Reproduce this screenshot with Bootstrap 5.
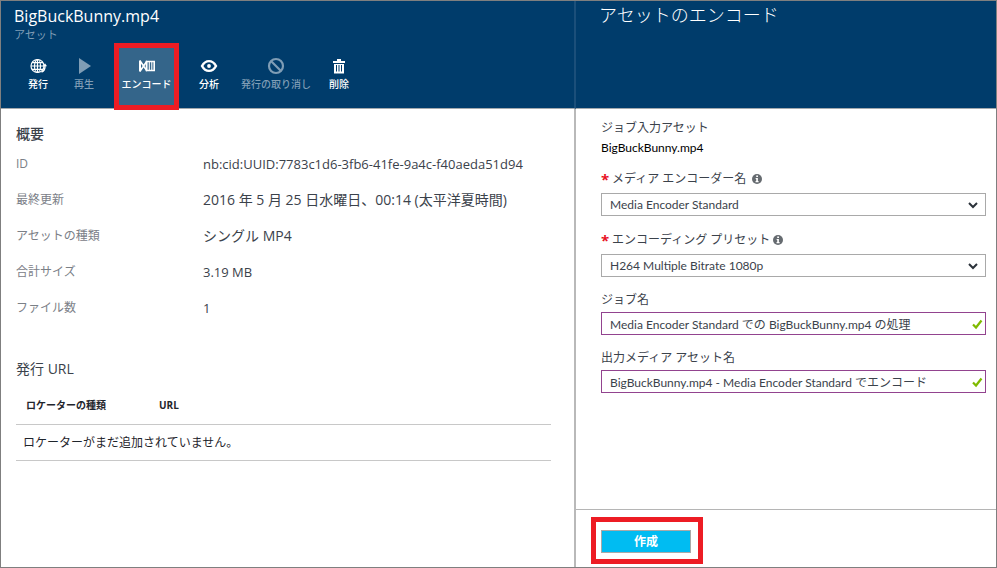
<!DOCTYPE html>
<html lang="ja">
<head>
<meta charset="utf-8">
<meta name="viewport" content="width=device-width, initial-scale=1">
<title>BigBuckBunny.mp4 - アセットのエンコード</title>
<link rel="stylesheet" href="https://cdn.jsdelivr.net/npm/bootstrap@5.3.0/dist/css/bootstrap.min.css">
<style>
  body { font-family: "Open Sans", "Noto Sans CJK JP", sans-serif; font-size: 12px; line-height: 16px; color: #3b424b; }
  .portal { border: 1px solid #7f7f7f; }
  .blade-asset { flex: 573 1 0; min-width: 0; border-right: 2px solid #b9b9b9; }
  .blade-encode { flex: 420 1 0; min-width: 0; }
  .blade-head { height: 108px; background: #003c6b; color: #fff; border-bottom: 1px solid #a3a9ae; }
  .blade-asset .blade-head { padding: 3px 13px 0; margin-right: -2px; border-right: 2px solid #1b4f7a; }
  .blade-encode .blade-head { padding: 1px 23px 0; }
  .blade-title { font-size: 16px; line-height: 24px; font-weight: 400; margin: 0; }
  .blade-encode .blade-title { font-size: 18px; font-family: "Noto Sans CJK JP", sans-serif; font-weight: 300; }
  .blade-kind { font-size: 11px; line-height: 14px; color: #7f9db5; }
  .toolbar { padding: 6px 0 0 1px; }
  .tool-btn { border: 0; background: none; color: #fff; font-size: 10px; line-height: 14px; font-weight: 500; padding: 9px 2px 14px; min-width: 46px; height: 57px; }
  .tool-btn svg { display: block; width: 18px; height: 18px; margin: 0 auto 2px; }
  .tool-btn:disabled { color: #7f9db5; }
  .tool-active { background: #34658a; outline: 5px solid #ed1c24; margin: 0 12px; width: 55px; }
  .tool-wide { margin: 0 3px 0 7px; }
  .latin { font-family: Lato, "Noto Sans CJK JP", sans-serif; }
  .asset-body { padding: 15px 23px 0 15px; }
  .section-title { font-size: 14px; line-height: 20px; font-weight: 400; margin: 0; }
  .facts { display: grid; grid-template-columns: 187px 1fr; grid-auto-rows: 36px; align-items: center; margin: 2px 0 33px; }
  .facts dt { font-weight: 400; color: #7b8087; }
  .facts dd { margin: 0; font-size: 14px; line-height: 20px; }
  .facts .fact-id { font-size: 13px; }
  .locators { width: 100%; table-layout: fixed; color: #1f252c; }
  .locators th { font-size: 10px; font-weight: 700; padding: 8px 10px 0; height: 45px; }
  .locators th:first-child { width: 133px; }
  .locators td { padding: 2px 7px 0; height: 36px; border: solid #c8c8c8; border-width: 1px 0; }
  .encode-body { padding: 11px 10px 0 25px; }
  .field-name { display: flex; align-items: center; height: 16px; white-space: pre; }
  .field-gap { margin-top: 15px; }
  .select-wrap { margin-top: 6px; }
  .req { color: #e81123; font-weight: 700; font-size: 15px; width: 11px; }
  .info { width: 10px; height: 10px; margin-left: 3px; }
  .field { font-family: Lato, "Noto Sans CJK JP", sans-serif; height: 23px; border: 1px solid #a9a9a9; border-radius: 0; background: #fff; color: #3b424b; font-size: 12px; line-height: 16px; padding: 2px 30px 2px 8px; width: 100%; appearance: none; display: block; }
  .field-valid { border-color: #92438f; }
  .field-icon { position: absolute; right: 7px; top: 6px; width: 12px; height: 12px; pointer-events: none; }
  .valid-icon { right: 3px; }
  .encode-foot { border-top: 1px solid #b5b5b5; padding: 7px 15px 3px; }
  .create-mark { border: 5px solid #ed1c24; padding: 8px 7px 6px 5px; }
  .create-btn { width: 90px; height: 23px; border: 1px solid #a9a9a9; border-radius: 0; background: #00bcf2; color: #fff; font-size: 12px; font-weight: 700; line-height: 16px; padding: 0; }
</style>
</head>
<body>
<div class="portal d-flex min-vh-100 bg-white">
  <main class="blade-asset d-flex flex-column">
    <header class="blade-head">
      <h1 class="blade-title">BigBuckBunny.mp4</h1>
      <div class="blade-kind">アセット</div>
      <div class="toolbar d-flex">
        <button class="tool-btn" type="button">
          <svg viewBox="0 0 18 18" fill="none" stroke="currentColor" stroke-width="1.2"><circle cx="8.500" cy="9" r="6.500"/><ellipse cx="8.500" cy="9" rx="3" ry="6.500"/><path d="M8.500 2.500v13M2 9h13M3 5.700h11M3 12.300h11"/><path d="M12.500 15c2.500-1 3.700-3.200 3.500-6" stroke-width="1.400"/><path d="M13.800 9.300 16 6.300l2 3z" fill="currentColor" stroke="none"/></svg>発行</button>
        <button class="tool-btn" type="button" disabled>
          <svg viewBox="0 0 18 18" fill="currentColor"><path d="M4 1l12 8-12 8z"/></svg>再生</button>
        <button class="tool-btn tool-active" type="button">
          <svg viewBox="0 0 18 18" fill="none" stroke="currentColor"><path d="M2 3.500v11" stroke-width="2"/><path d="M2 3.800 9 14M2 14.200 9 4" stroke-width="1.600"/><path d="M8.500 4.500h7.700v9H8.500z" stroke-width="1.600"/><path d="M8.800 4v10M11.300 4v10M13.800 4v10" stroke-width="1.100"/></svg>エンコード</button>
        <button class="tool-btn" type="button">
          <svg viewBox="0 0 18 18" fill="none" stroke="currentColor"><path d="M2 9c3.500-6.500 10.500-6.500 14 0-3.500 6.500-10.500 6.500-14 0z" stroke-width="2.400"/><circle cx="9" cy="9" r="1.900" fill="currentColor" stroke="none"/></svg>分析</button>
        <button class="tool-btn tool-wide text-nowrap" type="button" disabled>
          <svg viewBox="0 0 18 18" fill="none" stroke="currentColor" stroke-width="2.200"><circle cx="9" cy="9" r="7"/><path d="M4 4l10 10"/></svg>発行の取り消し</button>
        <button class="tool-btn" type="button">
          <svg viewBox="0 0 18 18" fill="currentColor"><path d="M3 4h4V2h4v2h4v2H3z"/><path fill-rule="evenodd" d="M4 7h10v9.500H4zM6 8v6.500h1V8zm2.500 0v6.500h1V8zM11 8v6.500h1V8z"/></svg>削除</button>
      </div>
    </header>
    <div class="asset-body">
      <h2 class="section-title fw-medium">概要</h2>
      <dl class="facts">
        <dt>ID</dt><dd class="fact-id">nb:cid:UUID:7783c1d6-3fb6-41fe-9a4c-f40aeda51d94</dd>
        <dt>最終更新</dt><dd>2016 年 5 月 25 日水曜日、00:14 (太平洋夏時間)</dd>
        <dt>アセットの種類</dt><dd>シングル MP4</dd>
        <dt>合計サイズ</dt><dd class="fact-id">3.19 MB</dd>
        <dt>ファイル数</dt><dd class="fact-id">1</dd>
      </dl>
      <h2 class="section-title">発行 URL</h2>
      <table class="locators">
        <thead><tr><th scope="col">ロケーターの種類</th><th scope="col">URL</th></tr></thead>
        <tbody><tr><td colspan="2">ロケーターがまだ追加されていません。</td></tr></tbody>
      </table>
    </div>
  </main>
  <section class="blade-encode d-flex flex-column">
    <header class="blade-head"><h2 class="blade-title">アセットのエンコード</h2></header>
    <form class="d-flex flex-column flex-grow-1">
      <div class="encode-body flex-grow-1">
        <div class="field-name">ジョブ入力アセット</div>
        <div class="latin mt-1 text-black">BigBuckBunny.mp4</div>
        <label class="field-name field-gap" for="encoder"><span class="req">*</span>メディア エンコーダー名 <svg class="info" viewBox="0 0 9 9"><circle cx="4.500" cy="4.500" r="4.500" fill="#666b70"/><path d="M3.800 1.400h1.600v1.300H3.800zM3.300 3.600h2v2.800h.6v1H3.200v-1h.6V4.500h-.5z" fill="#fff"/></svg></label>
        <div class="select-wrap position-relative">
          <select class="field" id="encoder"><option>Media Encoder Standard</option></select>
          <svg class="field-icon" viewBox="0 0 12 12" fill="none" stroke="#2b323a" stroke-width="2"><path d="M2 4l4 4 4-4"/></svg>
        </div>
        <label class="field-name mt-3" for="preset"><span class="req">*</span>エンコーディング プリセット<svg class="info" viewBox="0 0 9 9"><circle cx="4.500" cy="4.500" r="4.500" fill="#666b70"/><path d="M3.800 1.400h1.600v1.300H3.800zM3.300 3.600h2v2.800h.6v1H3.200v-1h.6V4.500h-.5z" fill="#fff"/></svg></label>
        <div class="select-wrap position-relative">
          <select class="field" id="preset"><option>H264 Multiple Bitrate 1080p</option></select>
          <svg class="field-icon" viewBox="0 0 12 12" fill="none" stroke="#2b323a" stroke-width="2"><path d="M2 4l4 4 4-4"/></svg>
        </div>
        <label class="field-name field-gap" for="job">ジョブ名</label>
        <div class="position-relative mt-1">
          <input class="field field-valid" id="job" type="text" value="Media Encoder Standard での BigBuckBunny.mp4 の処理">
          <svg class="field-icon valid-icon" viewBox="0 0 12 12" fill="none" stroke="#7fba00" stroke-width="2.200"><path d="M2 6.500l3 3 5.500-7"/></svg>
        </div>
        <label class="field-name field-gap" for="output">出力メディア アセット名</label>
        <div class="position-relative mt-1">
          <input class="field field-valid" id="output" type="text" value="BigBuckBunny.mp4 - Media Encoder Standard でエンコード">
          <svg class="field-icon valid-icon" viewBox="0 0 12 12" fill="none" stroke="#7fba00" stroke-width="2.200"><path d="M2 6.500l3 3 5.500-7"/></svg>
        </div>
      </div>
      <footer class="encode-foot d-flex"><div class="create-mark d-flex"><button class="create-btn" type="button">作成</button></div></footer>
    </form>
  </section>
</div>
<script src="https://cdn.jsdelivr.net/npm/bootstrap@5.3.0/dist/js/bootstrap.bundle.min.js"></script>
</body>
</html>
